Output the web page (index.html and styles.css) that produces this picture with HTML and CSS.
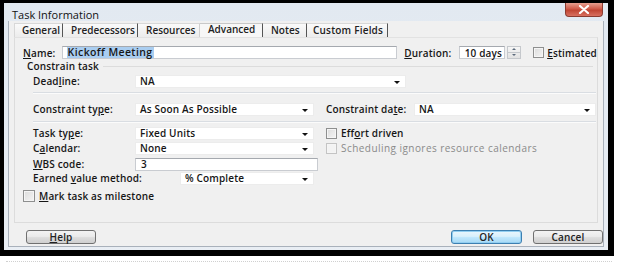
FILE: index.html
```html
<!DOCTYPE html>
<html lang="en">
<head>
    <meta charset="UTF-8">
    <title>Task Information</title>
    <link rel="stylesheet" href="styles.css">
</head>
<body>
    <div class="frame">
        <div class="window">
            <div class="titlebar">
                <span class="title">Task Information</span>
                <span class="close-btn">
                    <svg width="12" height="9" viewBox="0 0 12 9"><path d="M2 1 L10 8 M10 1 L2 8" stroke="#fff" stroke-width="2.2" stroke-linecap="round"/></svg>
                </span>
            </div>
            <div class="client">
                <div class="tabs">
                    <div class="tab tab-general">General</div>
                    <div class="tab tab-pred">Predecessors</div>
                    <div class="tab tab-res">Resources</div>
                    <div class="tab tab-adv active">Advanced</div>
                    <div class="tab tab-notes">Notes</div>
                    <div class="tab tab-custom">Custom Fields</div>
                </div>
                <div class="panel">
                    <div class="row name-row">
                        <span class="label name-label"><u>N</u>ame:</span>
                        <span class="textbox name-box"><span class="selected-text">Kickoff Meeting</span></span>
                        <span class="label duration-label"><u>D</u>uration:</span>
                        <span class="textbox duration-box">10 days</span>
                        <span class="spinner">
                            <span class="spin-up"></span>
                            <span class="spin-down"></span>
                        </span>
                        <span class="checkbox est-check"></span>
                        <span class="label"><u>E</u>stimated</span>
                    </div>
                    <div class="group-row">
                        <span class="group-title">Constrain task</span>
                        <span class="group-line"></span>
                    </div>
                    <div class="row form-row deadline-row">
                        <span class="label field-label">Dead<u>l</u>ine:</span>
                        <span class="combo deadline-combo">NA<span class="arrow"></span></span>
                    </div>
                    <div class="separator sep-1"></div>
                    <div class="row form-row">
                        <span class="label field-label">Constraint ty<u>p</u>e:</span>
                        <span class="combo short-combo">As Soon As Possible<span class="arrow"></span></span>
                        <span class="label date-label">Constraint da<u>t</u>e:</span>
                        <span class="combo date-combo">NA<span class="arrow"></span></span>
                    </div>
                    <div class="separator sep-2"></div>
                    <div class="row form-row">
                        <span class="label field-label">Task ty<u>p</u>e:</span>
                        <span class="combo short-combo">Fixed Units<span class="arrow"></span></span>
                        <span class="checkbox side-check"></span>
                        <span class="label">Eff<u>o</u>rt driven</span>
                    </div>
                    <div class="row form-row calendar-row">
                        <span class="label field-label">C<u>a</u>lendar:</span>
                        <span class="combo short-combo">None<span class="arrow"></span></span>
                        <span class="checkbox side-check disabled"></span>
                        <span class="label disabled-text">Schedulin<u>g</u> ignores resource calendars</span>
                    </div>
                    <div class="row form-row wbs-row">
                        <span class="label field-label"><u>W</u>BS code:</span>
                        <span class="textbox wbs-box">3</span>
                    </div>
                    <div class="row form-row">
                        <span class="label earned-label">Earned <u>v</u>alue method:</span>
                        <span class="combo earned-combo">% Complete<span class="arrow"></span></span>
                    </div>
                    <div class="row milestone-row">
                        <span class="checkbox milestone-check"></span>
                        <span class="label"><u>M</u>ark task as milestone</span>
                    </div>
                </div>
                <div class="buttons">
                    <span class="button help-btn"><u>H</u>elp</span>
                    <span class="button default-btn">OK</span>
                    <span class="button cancel-btn">Cancel</span>
                </div>
            </div>
        </div>
    </div>
    <div class="shadow-line"></div>
</body>
</html>
```

FILE: styles.css
```css
body {
    margin: 0;
    background-color: #fff;
    font-family: 'Open Sans', 'Liberation Sans', sans-serif;
    font-size: 10px;
    font-weight: 600;
    letter-spacing: 0.15px;
    color: #161616;
}

u {
    text-decoration: underline;
    text-underline-offset: 1px;
}

.frame {
    width: 604px;
    height: 247px;
    border-style: solid;
    border-color: #000;
    border-width: 3px 6px 6px 4px;
}

.window {
    height: 100%;
    box-sizing: border-box;
    background: linear-gradient(#e2e9f1, #e9eef4);
    padding: 0 4px 3px 4px;
    display: flex;
    flex-direction: column;
}

.titlebar {
    height: 18px;
    display: flex;
    align-items: flex-start;
}

.title {
    margin: 4px 0 0 4px;
    font-size: 11px;
    font-weight: 400;
    letter-spacing: 0;
    color: #111;
}

.close-btn {
    margin-left: auto;
    margin-right: 1px;
    width: 38px;
    height: 14px;
    box-sizing: border-box;
    border: 1px solid #8a3b30;
    border-top: 0;
    border-radius: 0 0 4px 4px;
    background: linear-gradient(#e6a090, #cf5a48 45%, #c04533 55%, #d87060);
    display: flex;
    justify-content: center;
    align-items: center;
}

.client {
    flex: 1;
    background-color: #f0f0f0;
    border: 1px solid #a9b1bb;
    border-top: 0;
    padding-bottom: 2px;
}

.tabs {
    display: flex;
    margin: 2px 0 0 5px;
    height: 14px;
}

.tab {
    height: 14px;
    line-height: 13px;
    box-sizing: border-box;
    padding-left: 7px;
    border-right: 1px solid #555;
    border-top: 1px solid #d8d8d8;
    background: linear-gradient(#fafafa, #ececec);
    color: #222;
    letter-spacing: 0;
}

.tab-general { width: 49px; border-left: 1px solid #d8d8d8; }
.tab-pred { width: 75px; padding-left: 8px; }
.tab-res { width: 62px; padding-left: 8px; border-right-color: #cfcfcf; }
.tab-adv { width: 63px; padding-left: 8px; }
.tab-notes { width: 44px; padding-left: 8px; }
.tab-custom { width: 81px; padding-left: 6px; letter-spacing: 0.2px; }

.tab.active {
    background: #f7f7f7;
    line-height: 11px;
    border-top-color: #c8c8c8;
}

.panel {
    margin-left: 5px;
    margin-right: 5px;
    height: 186px;
    box-sizing: border-box;
    border: 1px solid #dcdcdc;
    border-top-color: #e2e2e2;
}

.row {
    display: flex;
    align-items: center;
    height: 14px;
}

.label {
    white-space: nowrap;
}

.name-row {
    margin-top: 8px;
    height: 13px;
    padding-left: 8px;
}

.name-label {
    width: 39px;
}

.textbox {
    height: 13px;
    box-sizing: border-box;
    background-color: #fff;
    border: 1px solid #c9ccd1;
    border-top-color: #a5a9af;
    display: flex;
    align-items: center;
    padding-left: 4px;
}

.name-box {
    width: 339px;
}

.selected-text {
    background-color: #a9cdf0;
    padding: 0 1px;
    line-height: 11px;
    font-size: 10.5px;
    letter-spacing: 0.4px;
}

.duration-label {
    margin-left: 7px;
    width: 55px;
}

.duration-box {
    width: 47px;
    padding-left: 5px;
}

.spinner {
    width: 14px;
    height: 13px;
    margin-left: 2px;
    display: flex;
    flex-direction: column;
    border: 1px solid #c5c8cc;
    box-sizing: border-box;
    background: linear-gradient(#f6f6f6, #e2e2e2);
}

.spin-up, .spin-down {
    flex: 1;
    position: relative;
}

.spin-up {
    border-bottom: 1px solid #c5c8cc;
}

.spin-up::after, .spin-down::after {
    content: "";
    position: absolute;
    left: 4px;
    top: 1px;
    border-left: 2px solid transparent;
    border-right: 2px solid transparent;
}

.spin-up::after {
    border-bottom: 2px solid #5d6b7c;
}

.spin-down::after {
    border-top: 2px solid #5d6b7c;
}

.checkbox {
    width: 11px;
    height: 11px;
    box-sizing: border-box;
    border: 1px solid #8e8f8f;
    background: linear-gradient(135deg, #dcdcdc, #f4f4f4);
    box-shadow: inset 0 0 0 1px #f5f5f5;
    margin-right: 4px;
}

.est-check {
    margin-left: 12px;
    margin-right: 3px;
}

.group-row {
    display: flex;
    align-items: center;
    height: 12px;
    margin-top: 1px;
    padding-left: 12px;
}

.group-line {
    flex: 1;
    height: 1px;
    margin: 1px 4px 0 4px;
    background-color: #dcdcdc;
}

.form-row {
    padding-left: 18px;
}

.field-label {
    width: 102px;
}

.combo {
    height: 13px;
    box-sizing: border-box;
    background-color: #fff;
    border: 1px solid #ececec;
    padding-left: 4px;
    display: flex;
    align-items: center;
    position: relative;
}

.arrow {
    position: absolute;
    right: 5px;
    top: 5px;
    border-left: 3px solid transparent;
    border-right: 3px solid transparent;
    border-top: 3px solid #111;
}

.deadline-row {
    margin-top: 2px;
}

.deadline-combo {
    width: 271px;
}

.separator {
    margin-left: 18px;
    margin-right: 1px;
    height: 1px;
    background-color: #d9dde2;
    border-bottom: 1px solid #fbfbfb;
}

.sep-1 {
    margin-top: 4px;
    margin-bottom: 8px;
}

.sep-2 {
    margin-top: 5px;
    margin-bottom: 3px;
}

.short-combo {
    width: 179px;
}

.date-label {
    margin-left: 12px;
    width: 88px;
}

.date-combo {
    width: 182px;
}

.side-check {
    margin-left: 12px;
}

.checkbox.disabled {
    border-color: #c4c4c4;
    background: #f3f3f3;
}

.disabled-text {
    color: #8a8a8a;
    font-weight: 500;
    letter-spacing: 0.45px;
}

.calendar-row {
    margin-top: 1px;
}

.wbs-row {
    margin-top: 2px;
}

.wbs-box {
    width: 183px;
    padding-left: 5px;
}

.earned-label {
    width: 147px;
}

.earned-combo {
    width: 134px;
}

.milestone-row {
    margin-top: 4px;
    padding-left: 8px;
}

.milestone-check {
    width: 12px;
    height: 12px;
}

.buttons {
    display: flex;
    margin-top: 7px;
    padding-left: 17px;
}

.button {
    width: 70px;
    height: 14px;
    box-sizing: border-box;
    border: 1px solid #707070;
    border-radius: 3px;
    background: linear-gradient(#f3f3f3, #ebebeb 45%, #dddddd 55%, #cfcfcf);
    display: flex;
    justify-content: center;
    align-items: center;
    color: #222;
}

.default-btn {
    margin-left: auto;
    width: 71px;
    border-color: #3c7fb1;
    background: linear-gradient(#eaf6fd, #d9f0fc 45%, #bee6fd 55%, #a7d9f5);
    box-shadow: inset 0 0 0 1px #92cef1;
}

.cancel-btn {
    margin-left: 11px;
    margin-right: 0;
}

.shadow-line {
    margin: 5px 0 0 6px;
    width: 606px;
    border-top: 1px dotted #d0d0d0;
}
```
